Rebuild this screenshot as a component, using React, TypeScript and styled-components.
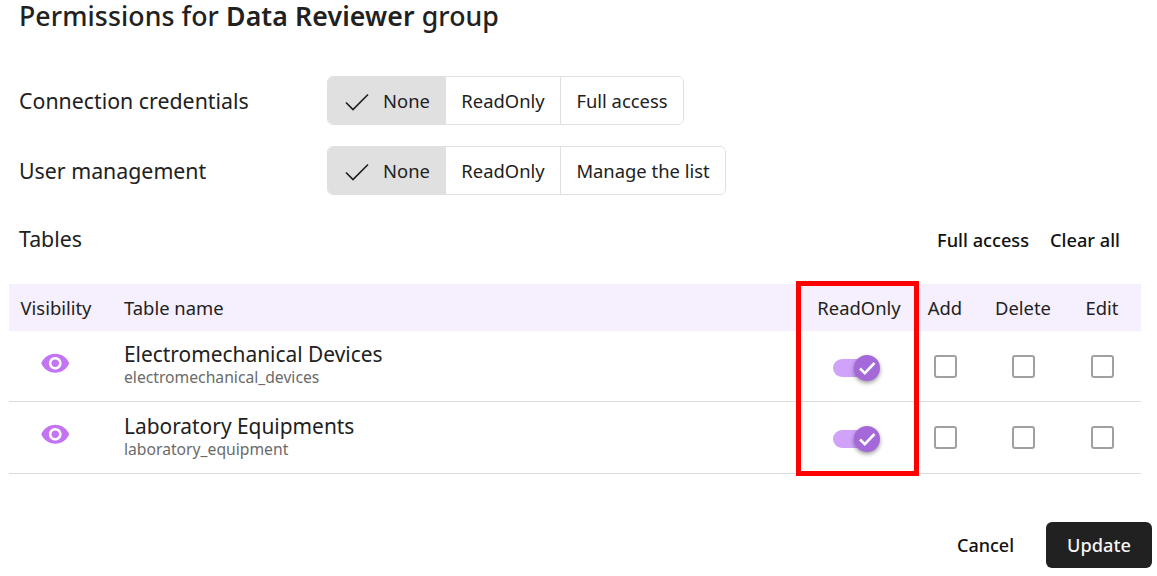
import React from 'react'
import styled, { createGlobalStyle } from 'styled-components'

const GlobalStyle = createGlobalStyle`
  html, body {
    margin: 0;
    padding: 0;
    background: #fff;
    overflow: hidden;
  }
  body {
    font-family: 'Noto Sans', sans-serif;
    color: #212121;
  }
`

const Page = styled.div`
  position: relative;
  width: 1157px;
  height: 576px;
  box-sizing: border-box;
  padding: 0 5px 0 9px;
  overflow: hidden;
`

const Title = styled.h2`
  margin: -1px 0 43px 10px;
  height: 34px;
  font-size: 26.67px;
  line-height: 34px;
  font-weight: 500;
  letter-spacing: 0.11px;
  strong {
    font-weight: 600;
  }
`

const PermissionRow = styled.div`
  display: flex;
  align-items: center;
  height: 49px;
  margin-bottom: 21px;
  padding-left: 10px;
`

const PermissionLabel = styled.div`
  width: 308px;
  font-size: 21.33px;
`

const Toggle = styled.div`
  display: flex;
  height: 49px;
  box-sizing: border-box;
  border: 1px solid #e0e0e0;
  border-radius: 6px;
  overflow: hidden;
`

const ToggleOption = styled.div<{ $selected?: boolean; $width: number }>`
  display: flex;
  align-items: center;
  justify-content: center;
  gap: 14px;
  width: ${p => p.$width}px;
  box-sizing: border-box;
  padding-left: ${p => (p.$selected ? '2px' : '0')};
  font-size: 18.4px;
  background: ${p => (p.$selected ? '#e0e0e0' : '#fff')};
  & + & {
    border-left: 1px solid #e0e0e0;
  }
`

const TablesBar = styled.div`
  display: flex;
  align-items: center;
  justify-content: space-between;
  height: 44px;
  margin-bottom: 24px;
  padding: 0 32px 0 10px;
`

const TablesLabel = styled.div`
  font-size: 21.33px;
`

const TablesActions = styled.div`
  display: flex;
  gap: 21px;
  padding-top: 3px;
  font-size: 18.2px;
  font-weight: 500;
  color: #111;
`

const Grid = styled.div`
  display: grid;
  grid-template-columns: 94px 699px 114px 58px 98px 60px 9px;
  width: 1132px;
  align-items: center;
`

const HeadRow = styled(Grid)`
  height: 47px;
  background: #f6effd;
  font-size: 18.4px;
`

const BodyRow = styled(Grid)`
  height: 70px;
  border-bottom: 1px solid #dcdcdc;
  box-sizing: content-box;
  & + & {
    height: 71px;
  }
`

const Cell = styled.div`
  display: flex;
  justify-content: center;
  align-items: center;
`

const HeadName = styled.div`
  padding-left: 21px;
`

const NameCell = styled.div`
  padding-left: 21px;
  margin-top: -4px;
`

const TableName = styled.div`
  font-size: 20.9px;
  line-height: 26px;
`

const TableSlug = styled.div`
  font-size: 15.7px;
  line-height: 20px;
  color: #6b6b6b;
`

const Eye = styled.svg`
  width: 30.5px;
  height: 30.5px;
  fill: #c274f2;
  margin: -6px 1px 0 0;
`

const Switch = styled.div`
  position: relative;
  width: 44px;
  height: 18px;
  border-radius: 9px;
  background: #d0a2fa;
  margin: 3px 8px 0 0;
`

const Thumb = styled.div`
  position: absolute;
  right: -3px;
  top: -4px;
  width: 26px;
  height: 26px;
  border-radius: 50%;
  background: #a468d9;
  box-shadow: 0 2px 4px rgba(0, 0, 0, 0.4);
`

const CheckBox = styled.div`
  width: 23px;
  height: 23px;
  margin-left: 1px;
  box-sizing: border-box;
  border: 2.5px solid #a0a0a0;
  border-radius: 3px;
  background: #fff;
`

const Footer = styled.div`
  display: flex;
  justify-content: flex-end;
  align-items: center;
  gap: 32px;
  margin-top: 48px;
`

const CancelButton = styled.div`
  font-size: 18px;
  font-weight: 500;
  color: #111;
`

const UpdateButton = styled.div`
  display: flex;
  align-items: center;
  justify-content: center;
  width: 106px;
  height: 46px;
  border-radius: 6px;
  background: #212121;
  color: #f5f5f5;
  font-size: 18.2px;
  font-weight: 500;
`

const Highlight = styled.div`
  position: absolute;
  left: 796px;
  top: 281px;
  width: 123px;
  height: 195px;
  box-sizing: border-box;
  border: 5px solid #ff0000;
  pointer-events: none;
`

const permissions = [
  { label: 'Connection credentials', last: 'Full access', width: 123 },
  { label: 'User management', last: 'Manage the list', width: 165 },
]

const tables = [
  { name: 'Electromechanical Devices', slug: 'electromechanical_devices' },
  { name: 'Laboratory Equipments', slug: 'laboratory_equipment' },
]

const App: React.FC = () => (
  <Page>
    <GlobalStyle />
    <Title>
      Permissions for <strong>Data Reviewer</strong> group
    </Title>

    {permissions.map(row => (
      <PermissionRow key={row.label}>
        <PermissionLabel>{row.label}</PermissionLabel>
        <Toggle>
          <ToggleOption $selected $width={117}>
            <svg width="24" height="24" viewBox="0 0 24 24" fill="none" stroke="#212121" strokeWidth="1.7">
              <path d="M1 13.5 L8 20.5 L23 5.5" />
            </svg>
            None
          </ToggleOption>
          <ToggleOption $width={115}>ReadOnly</ToggleOption>
          <ToggleOption $width={row.width}>{row.last}</ToggleOption>
        </Toggle>
      </PermissionRow>
    ))}

    <TablesBar>
      <TablesLabel>Tables</TablesLabel>
      <TablesActions>
        <span>Full access</span>
        <span>Clear all</span>
      </TablesActions>
    </TablesBar>

    <HeadRow>
      <Cell>Visibility</Cell>
      <HeadName>Table name</HeadName>
      <Cell>ReadOnly</Cell>
      <Cell>Add</Cell>
      <Cell>Delete</Cell>
      <Cell>Edit</Cell>
    </HeadRow>

    {tables.map(table => (
      <BodyRow key={table.slug}>
        <Cell>
          <Eye viewBox="0 0 24 24">
            <path d="M12 4.5C7 4.5 2.73 7.61 1 12c1.73 4.39 6 7.5 11 7.5s9.27-3.11 11-7.5c-1.73-4.39-6-7.5-11-7.5zM12 17c-2.76 0-5-2.24-5-5s2.24-5 5-5 5 2.24 5 5-2.24 5-5 5zm0-8c-1.66 0-3 1.34-3 3s1.34 3 3 3 3-1.34 3-3-1.34-3-3-3z" />
          </Eye>
        </Cell>
        <NameCell>
          <TableName>{table.name}</TableName>
          <TableSlug>{table.slug}</TableSlug>
        </NameCell>
        <Cell>
          <Switch>
            <Thumb>
              <svg width="26" height="26" viewBox="0 0 26 26" fill="none" stroke="#fff" strokeWidth="2.6">
                <path d="M6 13.5 L10.8 18.2 L20.5 8" />
              </svg>
            </Thumb>
          </Switch>
        </Cell>
        <Cell>
          <CheckBox />
        </Cell>
        <Cell>
          <CheckBox />
        </Cell>
        <Cell>
          <CheckBox />
        </Cell>
      </BodyRow>
    ))}

    <Footer>
      <CancelButton>Cancel</CancelButton>
      <UpdateButton>Update</UpdateButton>
    </Footer>

    <Highlight />
  </Page>
)

export default App
